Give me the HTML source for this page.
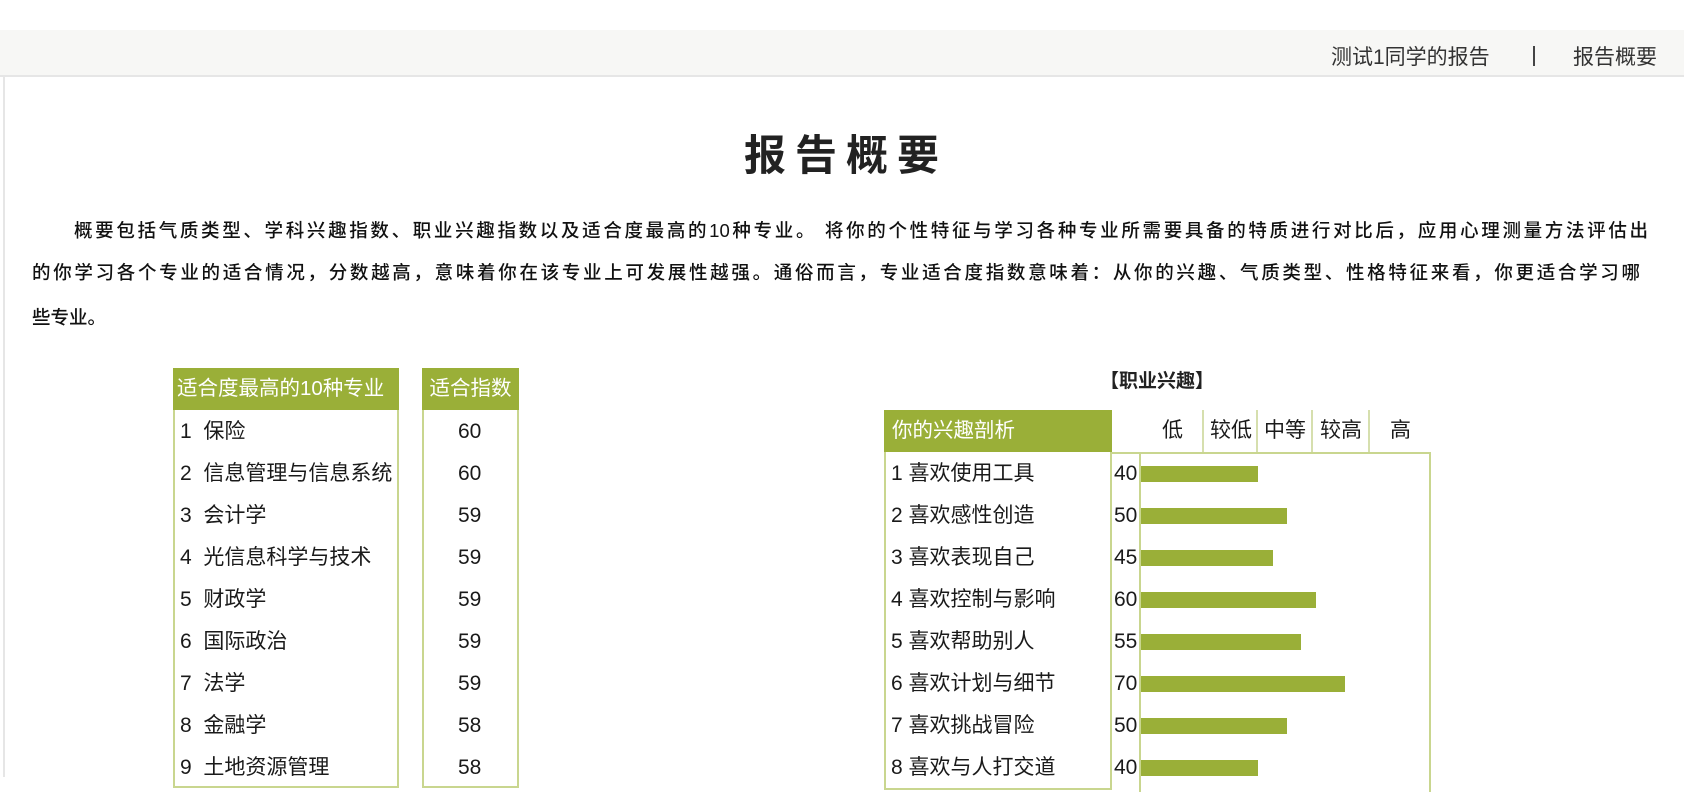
<!DOCTYPE html>
<html><head><meta charset="utf-8"><style>
*{margin:0;padding:0;box-sizing:border-box}
body{width:1684px;height:776px;overflow:hidden;background:#fff;font-family:"Liberation Sans","Noto Sans CJK SC",sans-serif;color:#222;position:relative}
.top{position:absolute;left:0;top:30px;width:1684px;height:47px;background:#f7f7f5;border-bottom:2px solid #e6e6e6}
.panel{position:absolute;left:3px;top:77px;width:1681px;height:700px;border-left:2px solid #e6e6e6}
.a{position:absolute;white-space:nowrap}
.p{position:absolute;font-size:18.5px;white-space:nowrap;text-align:justify;text-align-last:justify;height:26px;line-height:26px;color:#111;font-weight:500}
.tb{position:absolute;border:2px solid #c9d68f;border-top:none}
.hd{position:absolute;background:#9aaf38;color:#fff;font-size:20.5px;line-height:42px;white-space:nowrap;overflow:hidden}
.r{position:absolute;font-size:21px;line-height:26px;white-space:nowrap;color:#1a1a1a}
.bar{position:absolute;height:16px;background:#9aaf38}
</style></head><body>
<div class="top"></div>
<div class="a" style="left:1331px;top:41px;font-size:21px;color:#333">测试1同学的报告</div>
<div style="position:absolute;left:1533px;top:46px;width:2px;height:20px;background:#444"></div>
<div class="a" style="left:1573px;top:41px;font-size:21px;color:#333">报告概要</div>
<div class="panel"></div>
<div class="a" style="left:744px;top:122px;font-size:42px;letter-spacing:9px;color:#222;font-weight:600">报告概要</div>
<div class="p" style="left:74px;top:218px;width:1574px">概要包括气质类型、学科兴趣指数、职业兴趣指数以及适合度最高的10种专业。 将你的个性特征与学习各种专业所需要具备的特质进行对比后，应用心理测量方法评估出</div>
<div class="p" style="left:32px;top:260px;width:1608px">的你学习各个专业的适合情况，分数越高，意味着你在该专业上可发展性越强。通俗而言，专业适合度指数意味着：从你的兴趣、气质类型、性格特征来看，你更适合学习哪</div>
<div class="a" style="left:32px;top:304px;font-size:18.5px;color:#111;font-weight:500">些专业。</div>

<div class="tb" style="left:173px;top:368px;width:226px;height:420px"></div>
<div class="hd" style="left:173px;top:368px;width:226px;padding-left:4px">适合度最高的10种专业</div>
<div class="tb" style="left:422px;top:368px;width:97px;height:420px"></div>
<div class="hd" style="left:422px;top:368px;width:97px;text-align:center">适合指数</div>

<div class="r" style="left:180px;top:419px">1&nbsp; 保险</div>
<div class="r" style="left:180px;top:461px">2&nbsp; 信息管理与信息系统</div>
<div class="r" style="left:180px;top:503px">3&nbsp; 会计学</div>
<div class="r" style="left:180px;top:545px">4&nbsp; 光信息科学与技术</div>
<div class="r" style="left:180px;top:587px">5&nbsp; 财政学</div>
<div class="r" style="left:180px;top:629px">6&nbsp; 国际政治</div>
<div class="r" style="left:180px;top:671px">7&nbsp; 法学</div>
<div class="r" style="left:180px;top:713px">8&nbsp; 金融学</div>
<div class="r" style="left:180px;top:755px">9&nbsp; 土地资源管理</div>
<div class="r" style="left:458px;top:419px">60</div>
<div class="r" style="left:458px;top:461px">60</div>
<div class="r" style="left:458px;top:503px">59</div>
<div class="r" style="left:458px;top:545px">59</div>
<div class="r" style="left:458px;top:587px">59</div>
<div class="r" style="left:458px;top:629px">59</div>
<div class="r" style="left:458px;top:671px">59</div>
<div class="r" style="left:458px;top:713px">58</div>
<div class="r" style="left:458px;top:755px">58</div>

<div class="a" style="left:1100px;top:366px;font-size:19px;font-weight:600">【职业兴趣】</div>
<div class="tb" style="left:884px;top:410px;width:228px;height:380px"></div>
<div class="hd" style="left:884px;top:410px;width:228px;padding-left:8px">你的兴趣剖析</div>
<div style="position:absolute;left:1111px;top:452px;width:320px;height:340px;border:2px solid #c9d68f;border-bottom:none;border-left:none"></div>
<div style="position:absolute;left:1139px;top:452px;width:2px;height:340px;background:#c9d68f"></div>
<div style="position:absolute;left:1202px;top:410px;width:2px;height:42px;background:#d6dfae"></div>
<div style="position:absolute;left:1256px;top:410px;width:2px;height:42px;background:#d6dfae"></div>
<div style="position:absolute;left:1311px;top:410px;width:2px;height:42px;background:#d6dfae"></div>
<div style="position:absolute;left:1368px;top:410px;width:2px;height:42px;background:#d6dfae"></div>
<div class="r" style="left:1162px;top:418px">低</div>
<div class="r" style="left:1210px;top:418px">较低</div>
<div class="r" style="left:1264px;top:418px">中等</div>
<div class="r" style="left:1320px;top:418px">较高</div>
<div class="r" style="left:1390px;top:418px">高</div>

<div class="r" style="left:891px;top:461px">1 喜欢使用工具</div>
<div class="r" style="left:891px;top:503px">2 喜欢感性创造</div>
<div class="r" style="left:891px;top:545px">3 喜欢表现自己</div>
<div class="r" style="left:891px;top:587px">4 喜欢控制与影响</div>
<div class="r" style="left:891px;top:629px">5 喜欢帮助别人</div>
<div class="r" style="left:891px;top:671px">6 喜欢计划与细节</div>
<div class="r" style="left:891px;top:713px">7 喜欢挑战冒险</div>
<div class="r" style="left:891px;top:755px">8 喜欢与人打交道</div>
<div class="r" style="left:1114px;top:461px">40</div>
<div class="r" style="left:1114px;top:503px">50</div>
<div class="r" style="left:1114px;top:545px">45</div>
<div class="r" style="left:1114px;top:587px">60</div>
<div class="r" style="left:1114px;top:629px">55</div>
<div class="r" style="left:1114px;top:671px">70</div>
<div class="r" style="left:1114px;top:713px">50</div>
<div class="r" style="left:1114px;top:755px">40</div>
<div class="bar" style="left:1141px;top:466px;width:117px"></div>
<div class="bar" style="left:1141px;top:508px;width:146px"></div>
<div class="bar" style="left:1141px;top:550px;width:132px"></div>
<div class="bar" style="left:1141px;top:592px;width:175px"></div>
<div class="bar" style="left:1141px;top:634px;width:160px"></div>
<div class="bar" style="left:1141px;top:676px;width:204px"></div>
<div class="bar" style="left:1141px;top:718px;width:146px"></div>
<div class="bar" style="left:1141px;top:760px;width:117px"></div>
</body></html>
